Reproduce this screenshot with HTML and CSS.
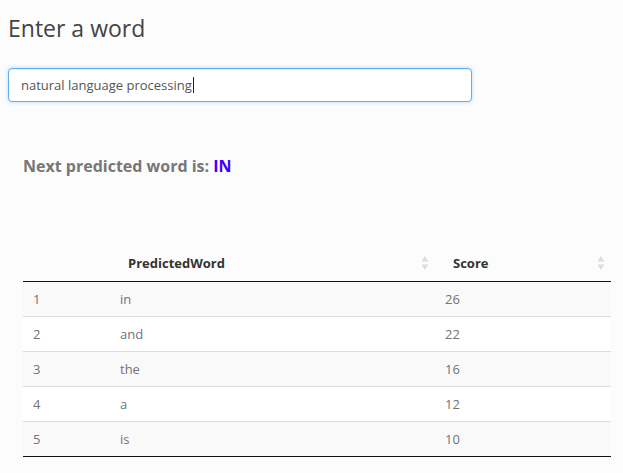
FILE: index.html
```html
<!DOCTYPE html>
<html lang="en">
<head>
<meta charset="utf-8">
<title>Next word prediction</title>
<link rel="stylesheet" href="styles.css">
</head>
<body>
<div class="page">
  <h2 class="title">Enter a word</h2>
  <div class="field">
    <span class="field-text">natural language processing</span><span class="caret"></span>
  </div>
  <div class="panel">
    <h4 class="prediction">Next predicted word is: <span class="word">IN</span></h4>
    <table class="results">
      <colgroup>
        <col class="c-idx">
        <col class="c-word">
        <col class="c-score">
      </colgroup>
      <thead>
        <tr>
          <th></th>
          <th><div class="th-inner"><span>PredictedWord</span><svg class="sort" width="8" height="14" viewBox="0 0 8 14"><path d="M4 0 L7.5 5.5 L0.5 5.5 Z"/><path d="M4 14 L7.5 8.5 L0.5 8.5 Z"/></svg></div></th>
          <th><div class="th-inner last"><span>Score</span><svg class="sort" width="8" height="14" viewBox="0 0 8 14"><path d="M4 0 L7.5 5.5 L0.5 5.5 Z"/><path d="M4 14 L7.5 8.5 L0.5 8.5 Z"/></svg></div></th>
        </tr>
      </thead>
      <tbody>
        <tr><td>1</td><td>in</td><td>26</td></tr>
        <tr><td>2</td><td>and</td><td>22</td></tr>
        <tr><td>3</td><td>the</td><td>16</td></tr>
        <tr><td>4</td><td>a</td><td>12</td></tr>
        <tr><td>5</td><td>is</td><td>10</td></tr>
      </tbody>
    </table>
  </div>
</div>
</body>
</html>
```
FILE: styles.css
```css
html, body {
  margin: 0;
  padding: 0;
  background: #fcfcfc;
}
body {
  font-family: "Open Sans", "Noto Sans", sans-serif;
  color: #333;
}
.page {
  padding: 0 8px;
}
.title {
  margin: 15px 0 0;
  font-size: 23px;
  line-height: 26px;
  font-weight: 400;
  color: #444;
}
.field {
  margin-top: 27px;
  width: 464px;
  height: 34px;
  box-sizing: border-box;
  border: 1px solid #66afe9;
  border-radius: 4px;
  background: #fff;
  box-shadow: inset 0 1px 1px rgba(0,0,0,.075), 0 0 4px rgba(102,175,233,.45);
  padding: 0 12px;
  display: flex;
  align-items: center;
  font-size: 13px;
  color: #555;
}
.caret {
  display: inline-block;
  width: 1px;
  height: 16px;
  background: #222;
  margin-left: 1px;
}
.panel {
  padding: 0 15px;
}
.prediction {
  margin: 54px 0 0;
  font-size: 16px;
  line-height: 20px;
  font-weight: 700;
  color: #777;
}
.word {
  color: #3b00ff;
}
.results {
  margin-top: 69px;
  width: 588px;
  border-collapse: collapse;
  table-layout: fixed;
  font-size: 13px;
  border-bottom: 1px solid #111;
}
.c-idx { width: 87px; }
.c-word { width: 325px; }
.c-score { width: 176px; }
.results th {
  height: 36px;
  padding: 0;
  text-align: left;
  font-weight: 700;
  color: #333;
  border-bottom: 1px solid #111;
  vertical-align: middle;
}
.th-inner {
  display: flex;
  align-items: center;
  justify-content: space-between;
  padding: 0 6px 0 18px;
}
.th-inner.last {
  padding-right: 6px;
}
.sort {
  fill: #dcdcdc;
  display: block;
}
.results td {
  height: 34px;
  padding: 0 10px;
  color: #737373;
  vertical-align: middle;
  border-top: 1px solid #ddd;
}
.results tbody tr:first-child td {
  border-top: 0;
}
.results tbody tr:nth-child(odd) td {
  background: #f9f9f9;
}
.results tbody tr:nth-child(even) td {
  background: #fff;
}
```
